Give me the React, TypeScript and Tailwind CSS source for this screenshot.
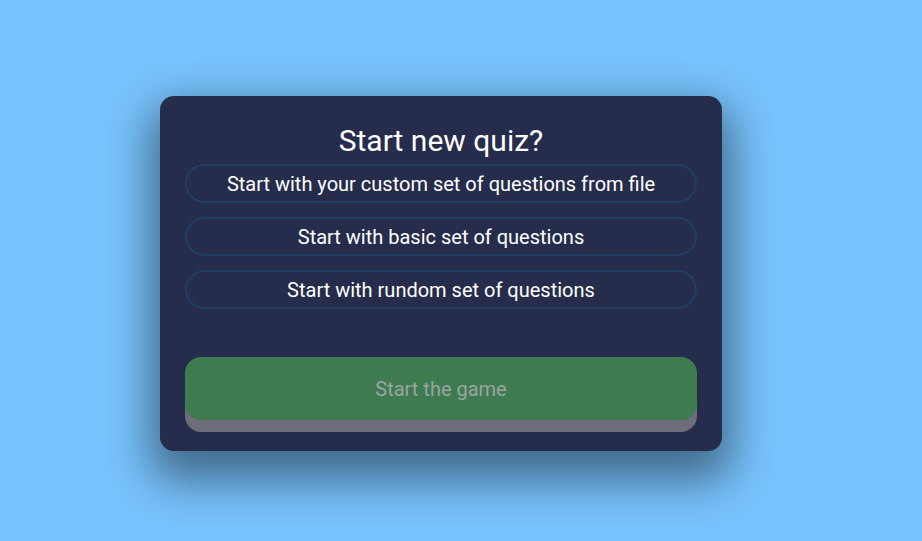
import React from 'react';

const options = [
  'Start with your custom set of questions from file',
  'Start with basic set of questions',
  'Start with rundom set of questions',
];

export default function App() {
  return (
    <div className="min-h-screen w-full bg-[#78c3fd] flex items-start justify-center pt-[96px] pr-[40px] font-['Roboto',sans-serif]">
      <div className="w-[562px] rounded-[14px] bg-[#262c4b] px-[25px] pt-[27px] pb-[19px] shadow-[0_20px_45px_10px_rgba(0,0,0,0.45)]">
        <h1 className="text-center text-[30px] leading-[36px] text-white mb-[5px]">Start new quiz?</h1>
        <div className="flex flex-col gap-[14px]">
          {options.map((o) => (
            <button
              key={o}
              className="h-[39px] w-full rounded-full border-2 border-[#1f3e63] text-[20px] text-white"
            >
              {o}
            </button>
          ))}
        </div>
        <button className="mt-[48px] h-[63px] w-full rounded-[16px] bg-[#3e7b4f] text-[20px] text-[#9aa4a6] shadow-[0_12px_0_#6c6c7a]">
          Start the game
        </button>
        <div className="h-[12px]" />
      </div>
    </div>
  );
}
